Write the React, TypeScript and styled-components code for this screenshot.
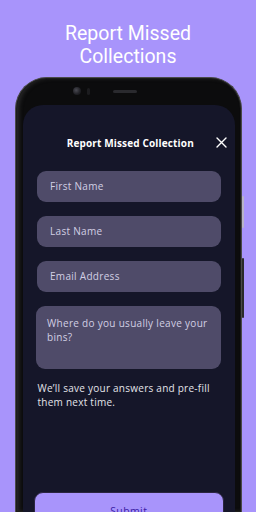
import React from 'react';
import styled, { createGlobalStyle } from 'styled-components';

const GlobalStyle = createGlobalStyle`
  html, body {
    margin: 0;
    padding: 0;
    background: #a894fb;
    overflow: hidden;
  }
  * {
    box-sizing: border-box;
  }
`;

const Page = styled.div`
  width: 256px;
  height: 512px;
  background: #a894fb;
  display: flex;
  flex-direction: column;
  align-items: center;
  overflow: hidden;
`;

const Headline = styled.h1`
  margin: 0;
  padding-top: 22px;
  height: 77px;
  flex-shrink: 0;
  font-family: Roboto, 'Liberation Sans', sans-serif;
  font-weight: 400;
  font-size: 19.5px;
  line-height: 23px;
  color: #ffffff;
  text-align: center;
`;

const Phone = styled.div`
  width: 227px;
  flex: 1;
  min-height: 0;
  margin-left: 1px;
  background: #0c0c0d;
  border-radius: 32px 32px 0 0;
  border: 1.5px solid #4a4a4a;
  border-bottom: none;
  box-shadow: inset 0 0 0 1px #1c1c1c, inset 3px 0 4px rgba(60, 60, 60, 0.6);
  display: flex;
  flex-direction: column;
  position: relative;
`;

const SideButton = styled.div<{ $top: number; $height: number; $light?: boolean }>`
  position: absolute;
  right: -3px;
  top: ${p => p.$top}px;
  width: 2px;
  height: ${p => p.$height}px;
  background: ${p => (p.$light ? '#b8b4c8' : '#2a2a2a')};
  border-radius: 1px;
`;

const Bezel = styled.div`
  height: 26.5px;
  flex-shrink: 0;
  display: flex;
  align-items: center;
  padding-left: 57px;
  gap: 6px;
`;

const Camera = styled.div`
  width: 8px;
  height: 8px;
  border-radius: 50%;
  background: radial-gradient(circle at 40% 40%, #4a4a52 0, #1f1f24 60%, #141416 100%);
`;

const Sensor = styled.div`
  width: 3px;
  height: 7px;
  border-radius: 2px;
  background: #1c1c1f;
`;

const Speaker = styled.div`
  width: 24px;
  height: 3px;
  margin-left: 17px;
  border-radius: 2px;
  background: #2a2a2e;
`;

const Screen = styled.div`
  flex: 1;
  min-height: 0;
  overflow: hidden;
  margin: 0 6px 0 6.5px;
  background: #151629;
  border-radius: 20px 20px 0 0;
  display: flex;
  flex-direction: column;
  padding: 28px 14px 0 14px;
`;

const Header = styled.div`
  height: 20px;
  flex-shrink: 0;
  display: flex;
  align-items: center;
  justify-content: center;
  position: relative;
`;

const Title = styled.div`
  font-family: 'Open Sans', 'DejaVu Sans', sans-serif;
  font-weight: 700;
  font-size: 10px;
  letter-spacing: 0.15px;
  color: #ffffff;
  margin-left: 3px;
`;

const Close = styled.button`
  position: absolute;
  right: -6px;
  top: 4px;
  width: 12px;
  height: 12px;
  padding: 0;
  border: none;
  background: none;
  display: flex;
  align-items: center;
  justify-content: center;
`;

const Form = styled.div`
  display: flex;
  flex-direction: column;
  flex-shrink: 0;
  gap: 13.5px;
  margin-top: 18px;
  padding-left: 0.5px;
`;

const Field = styled.div<{ $tall?: boolean }>`
  height: ${p => (p.$tall ? 63 : 31.5)}px;
  flex-shrink: 0;
  background: #4f4b69;
  border-radius: 9px;
  display: flex;
  align-items: ${p => (p.$tall ? 'flex-start' : 'center')};
  padding: ${p => (p.$tall ? '10px 10px 0 11px' : '0 13px')};
  margin-left: ${p => (p.$tall ? -1 : 0)}px;
  font-family: 'Open Sans', 'DejaVu Sans', sans-serif;
  font-size: 10px;
  line-height: 14px;
  letter-spacing: 0.3px;
  color: #d2cfe4;
`;

const Note = styled.p`
  margin: 12px 0 0 1px;
  flex-shrink: 0;
  font-family: 'Open Sans', 'DejaVu Sans', sans-serif;
  font-size: 10px;
  line-height: 14px;
  letter-spacing: 0.25px;
  color: #e4e4ea;
`;

const Submit = styled.button`
  margin: 83px -3px 0 -3px;
  height: 38px;
  flex-shrink: 0;
  border-radius: 9px;
  border: 1px solid #2b2540;
  background: #a894fb;
  font-family: 'Open Sans', 'DejaVu Sans', sans-serif;
  font-size: 10.5px;
  letter-spacing: 0.4px;
  color: #3a1ca6;
`;

export default function App() {
  return (
    <Page>
      <GlobalStyle />
      <Headline>
        Report Missed
        <br />
        Collections
      </Headline>
      <Phone>
        <SideButton $top={118} $height={32} $light />
        <SideButton $top={180} $height={60} />
        <Bezel>
          <Camera />
          <Sensor />
          <Speaker />
        </Bezel>
        <Screen>
          <Header>
            <Title>Report Missed Collection</Title>
            <Close aria-label="Close">
              <svg width="11" height="11" viewBox="0 0 11 11">
                <path d="M1 1L10 10M10 1L1 10" stroke="#ffffff" strokeWidth="1.4" strokeLinecap="round" />
              </svg>
            </Close>
          </Header>
          <Form>
            <Field>First Name</Field>
            <Field>Last Name</Field>
            <Field>Email Address</Field>
            <Field $tall>Where do you usually leave your bins?</Field>
          </Form>
          <Note>We’ll save your answers and pre-fill them next time.</Note>
          <Submit>Submit</Submit>
        </Screen>
      </Phone>
    </Page>
  );
}
